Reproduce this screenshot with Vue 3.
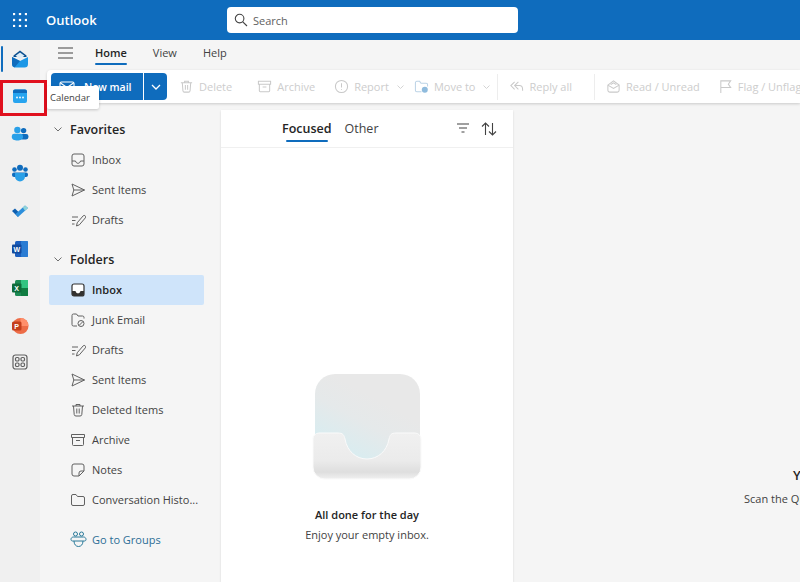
<template>
  <div class="app">
    <header class="topbar">
      <svg class="waffle" width="14" height="14" viewBox="0 0 14 14">
        <template v-for="x in [1, 7, 13]" :key="x">
          <circle v-for="y in [1, 7, 13]" :key="y" :cx="x" :cy="y" r="1.3" fill="#fff" />
        </template>
      </svg>
      <span class="brand">Outlook</span>
      <div class="search">
        <svg width="14" height="14" viewBox="0 0 14 14" fill="none" stroke="#424242" stroke-width="1.1">
          <circle cx="5.6" cy="5.6" r="4.3" />
          <path d="M8.8 8.8l4.2 4.2" />
        </svg>
        <span>Search</span>
      </div>
    </header>

    <div class="body">
      <nav class="rail">
        <span class="rail-active"></span>
        <div class="rail-item">
          <svg width="20" height="20" viewBox="0 0 20 20">
            <path d="M3.500 8V6.500L10 1.500l6.500 5V8z" fill="#0a4f8f" />
            <path d="M5.500 6.800L10 3.400l4.500 3.400L10 10z" fill="#dcecf7" />
            <path d="M2 8l8 4 8-4v7a3.500 3.500 0 0 1-3.500 3.500h-9A3.500 3.500 0 0 1 2 15z" fill="#1c97e6" />
            <path d="M2 8l8 4-5.500 6.400A3.500 3.500 0 0 1 2 15z" fill="#0f6cbd" />
          </svg>
        </div>
        <div class="rail-item">
          <svg width="16" height="16" viewBox="0 0 16 16">
            <rect x="1" y="1.500" width="14" height="13.500" rx="2" fill="#27a4ef" />
            <path d="M1 5V3.500a2 2 0 0 1 2-2h10a2 2 0 0 1 2 2V5z" fill="#0f6cbd" />
            <circle cx="5" cy="9.500" r="0.900" fill="#fff" />
            <circle cx="8" cy="9.500" r="0.900" fill="#fff" />
            <circle cx="11" cy="9.500" r="0.900" fill="#fff" />
          </svg>
        </div>
        <div class="rail-item">
          <svg width="18" height="18" viewBox="0 0 18 18">
            <circle cx="12.600" cy="5.600" r="2.700" fill="#0f6cbd" />
            <rect x="9" y="9" width="8.500" height="5.500" rx="2.400" fill="#0f6cbd" />
            <circle cx="6.400" cy="5" r="3.200" fill="#2aa0e8" />
            <path d="M0.800 11a2.400 2.400 0 0 1 2.400-2.200h6.400A2.400 2.400 0 0 1 12 11v1.200c0 2-2.600 3.300-5.600 3.300S0.800 14.200 0.800 12.200z" fill="#2aa0e8" />
          </svg>
        </div>
        <div class="rail-item">
          <svg width="18" height="18" viewBox="0 0 18 18">
            <circle cx="9" cy="3.800" r="3" fill="#0f6cbd" />
            <circle cx="3.500" cy="5.500" r="2.300" fill="#0f6cbd" />
            <circle cx="14.500" cy="5.500" r="2.300" fill="#0f6cbd" />
            <rect x="1" y="8.500" width="16" height="4.500" rx="2" fill="#0f6cbd" />
            <path d="M4 9h10v3.500a5 5 0 0 1-10 0z" fill="#2aa0e8" />
          </svg>
        </div>
        <div class="rail-item">
          <svg width="18" height="18" viewBox="0 0 18 18">
            <path d="M1 9l3-2.500L8 10.500 7 15z" fill="#0f5fb0" />
            <path d="M7 15L4.500 12 14 3.500 17 6z" fill="#2c8fdc" />
            <path d="M14 3.500L17 6l-3 2.700-2.200-3.200z" fill="#8fd3d8" />
          </svg>
        </div>
        <div class="rail-item">
          <svg width="18" height="18" viewBox="0 0 18 18">
            <rect x="4" y="1" width="13" height="16" rx="1.500" fill="#1b5ebe" />
            <rect x="10" y="1" width="7" height="16" rx="1" fill="#2b7cd3" />
            <rect x="1" y="4.500" width="9.500" height="9" rx="1" fill="#124b9e" />
            <text x="5.700" y="11.700" class="glyph">W</text>
          </svg>
        </div>
        <div class="rail-item">
          <svg width="18" height="18" viewBox="0 0 18 18">
            <rect x="4" y="1" width="13" height="16" rx="1.500" fill="#1d8a54" />
            <rect x="10" y="1" width="7" height="8" fill="#33c481" />
            <rect x="10" y="9" width="7" height="8" fill="#107c41" />
            <rect x="1" y="4.500" width="9.500" height="9" rx="1" fill="#0e6b3a" />
            <text x="5.700" y="11.700" class="glyph">X</text>
          </svg>
        </div>
        <div class="rail-item">
          <svg width="18" height="18" viewBox="0 0 18 18">
            <circle cx="9.500" cy="9" r="8" fill="#ed6c47" />
            <path d="M9.500 1a8 8 0 0 1 8 8h-8z" fill="#ff8f6b" />
            <rect x="1" y="4.500" width="9.500" height="9" rx="1.500" fill="#c43e1c" />
            <text x="5.700" y="11.700" class="glyph">P</text>
          </svg>
        </div>
        <div class="rail-item">
          <svg width="16" height="16" viewBox="0 0 16 16" fill="none" stroke="#616161" stroke-width="1.200">
            <rect x="1" y="1" width="14" height="14" rx="2.500" />
            <rect x="3.500" y="3.500" width="3.500" height="3.500" rx="1.200" />
            <rect x="9" y="3.500" width="3.500" height="3.500" rx="1.200" />
            <rect x="3.500" y="9" width="3.500" height="3.500" rx="1.200" />
            <rect x="9" y="9" width="3.500" height="3.500" rx="1.200" />
          </svg>
        </div>
      </nav>

      <div class="main">
        <div class="tabs">
          <svg class="burger" width="15" height="12" viewBox="0 0 15 12" stroke="#424242" stroke-width="1.100">
            <path d="M0 1h15M0 6h15M0 11h15" />
          </svg>
          <span class="tab tab-active">Home</span>
          <span class="tab">View</span>
          <span class="tab">Help</span>
        </div>

        <div class="toolbar">
          <div class="new-mail">
            <span class="new-main">
              <svg width="16" height="14" viewBox="0 0 16 14" fill="none" stroke="#fff" stroke-width="1.100">
                <rect x="1" y="2" width="14" height="10" rx="1.500" />
                <path d="M1.500 3l6.500 4.500L14.500 3" />
              </svg>
              New mail
            </span>
            <span class="new-arrow">
              <svg width="10" height="6" viewBox="0 0 10 6" fill="none" stroke="#fff" stroke-width="1.300"><path d="M1 1l4 4 4-4" /></svg>
            </span>
          </div>
          <template v-for="action in actions" :key="action.label">
            <span v-if="action.divider" class="tool-divider" :style="{ marginLeft: action.before + 'px' }"></span>
            <span class="tool" :style="{ marginLeft: action.gap + 'px' }">
              <svg width="15" height="15" viewBox="0 0 16 16" fill="none" :stroke="action.tint || '#c9c9c9'" stroke-width="1.100">
                <path :d="icons[action.icon]" />
                <circle v-if="action.icon === 'move'" cx="11.500" cy="11.500" r="3.200" fill="#8fbbdd" stroke="none" />
              </svg>
              {{ action.label }}
              <svg v-if="action.menu" class="tool-chev" width="7" height="4" viewBox="0 0 7 4" fill="none" stroke="#d4d4d4"><path d="M0.500 0.500l3 3 3-3" /></svg>
            </span>
          </template>
        </div>

        <div class="content">
          <aside class="sidebar">
            <section v-for="group in groups" :key="group.title" class="group">
              <div class="group-title">
                <svg width="8" height="5" viewBox="0 0 8 5" fill="none" stroke="#707070"><path d="M0.500 0.500l3.500 3.500 3.500-3.500" /></svg>
                {{ group.title }}
              </div>
              <div
                v-for="item in group.items"
                :key="item.label"
                class="folder"
                :class="{ 'folder-on': item.on }"
              >
                <svg width="16" height="16" viewBox="0 0 16 16" fill="none" stroke="#616161" stroke-width="1">
                  <path v-if="item.on" d="M2 4a2 2 0 0 1 2-2h8a2 2 0 0 1 2 2v8a2 2 0 0 1-2 2H4a2 2 0 0 1-2-2z" fill="#fff" stroke="#323130" stroke-width="1.200" />
                  <path v-if="item.on" d="M2 9h3.500c0.400 1.500 1.300 2.300 2.500 2.300s2.100-0.800 2.500-2.300H14v3a2 2 0 0 1-2 2H4a2 2 0 0 1-2-2z" fill="#323130" stroke="none" />
                  <path v-else :d="icons[item.icon]" />
                </svg>
                <span>{{ item.label }}</span>
              </div>
            </section>
            <div class="groups-link">
              <svg width="17" height="17" viewBox="0 0 17 17" fill="none" stroke="#2a7a9a" stroke-width="1">
                <circle cx="5.500" cy="3" r="2" />
                <circle cx="11.500" cy="3" r="2" />
                <path d="M1 8.500C1 7 2 6 3.500 6h10C15 6 16 7 16 8.500c0 1-0.800 1.500-1.500 1.500h-12C1.800 10 1 9.500 1 8.500z" />
                <path d="M4 10c0 3.500 2 5.500 4.500 5.500S13 13.500 13 10" />
              </svg>
              Go to Groups
            </div>
          </aside>

          <section class="list">
            <div class="list-head">
              <span class="pivot pivot-on">Focused</span>
              <span class="pivot">Other</span>
              <svg class="filter" width="14" height="10" viewBox="0 0 14 10" stroke="#424242" stroke-width="1.100"><path d="M1 1h12M3 5h8M5.500 9h3" /></svg>
              <svg class="sort" width="16" height="14" viewBox="0 0 16 14" fill="none" stroke="#424242" stroke-width="1.100">
                <path d="M4.500 13V1M1 4.500L4.500 1 8 4.500M11.500 1v12M8 9.500l3.500 3.500L15 9.500" />
              </svg>
            </div>
            <div class="empty">
              <svg width="110" height="108" viewBox="0 0 110 108">
                <defs>
                  <linearGradient id="back" x1="0.100" y1="0.950" x2="0.550" y2="0.250">
                    <stop offset="0" stop-color="#d3eef3" />
                    <stop offset="0.650" stop-color="#e5e9ea" />
                    <stop offset="1" stop-color="#e8e8e8" />
                  </linearGradient>
                  <linearGradient id="tray" x1="0" y1="0" x2="0" y2="1">
                    <stop offset="0" stop-color="#f0f0f0" />
                    <stop offset="0.600" stop-color="#ebebeb" />
                    <stop offset="0.850" stop-color="#dedede" />
                    <stop offset="1" stop-color="#f0f0f0" />
                  </linearGradient>
                </defs>
                <rect x="3" y="1" width="105" height="90" rx="20" fill="url(#back)" />
                <path d="M1 66a6 6 0 0 1 6-6h19c5 0 6 2 7 6 2 12 11 20 22 20s20-8 22-20c1-4 2-6 7-6h19a6 6 0 0 1 6 6v28a12 12 0 0 1-12 12H13A12 12 0 0 1 1 94z" fill="url(#tray)" stroke="#fafafa" stroke-width="1" />
              </svg>
              <strong>All done for the day</strong>
              <span>Enjoy your empty inbox.</span>
            </div>
          </section>

          <section class="reading">
            <strong>You can also use Outlook on your phone</strong>
            <span>Scan the QR code to get the app</span>
          </section>
        </div>
      </div>
    </div>

    <div class="red-box"></div>
    <div class="tooltip">Calendar</div>
  </div>
</template>

<script setup>
const icons = {
  inbox: "M2 4a2 2 0 0 1 2-2h8a2 2 0 0 1 2 2v8a2 2 0 0 1-2 2H4a2 2 0 0 1-2-2zM2 9h3.500c0.400 1.500 1.300 2.300 2.500 2.300s2.100-0.800 2.500-2.300H14",
  sent: "M2 2l12.500 6L2 14l1.800-6zM3.800 8h10.700",
  drafts: "M2 5h6M2 8.500h3.500M2 12h2.500M6.500 14l0.700-3.200 6-7a1.500 1.500 0 0 1 2.200 2l-6 7z",
  junk: "M2 5V3.500A1.500 1.500 0 0 1 3.500 2h3L8 4h4.500A1.500 1.500 0 0 1 14 5.500v1M2 5v7.500A1.500 1.500 0 0 0 3.500 14H7M14 11.500a3 3 0 1 1-6 0 3 3 0 0 1 6 0zM9 13.500l4-4",
  trash: "M2 4h12M6 4V2.500h4V4M3.500 4l0.700 8.500A1.700 1.700 0 0 0 6 14h4a1.700 1.700 0 0 0 1.800-1.500l0.700-8.500M6.800 6.500v5M9.200 6.500v5",
  archive: "M1.500 2.500h13v3h-13zM2.500 5.500v7a1 1 0 0 0 1 1h9a1 1 0 0 0 1-1v-7M6 8.500h4",
  notes: "M2 4a2 2 0 0 1 2-2h8a2 2 0 0 1 2 2v5l-5 5H4a2 2 0 0 1-2-2zM14 9h-3a2 2 0 0 0-2 2v3",
  folder: "M1.500 4A1.500 1.500 0 0 1 3 2.500h3L7.500 4.500H13A1.500 1.500 0 0 1 14.500 6v6a1.500 1.500 0 0 1-1.500 1.500H3A1.500 1.500 0 0 1 1.500 12z",
  report: "M14.500 8a6.500 6.500 0 1 1-13 0 6.500 6.500 0 0 1 13 0zM8 4.500V9M8 11v0.800",
  move: "M1.500 4A1.500 1.500 0 0 1 3 2.500h3L7.500 4.500H13A1.500 1.500 0 0 1 14.500 6v2M1.500 4v8A1.500 1.500 0 0 0 3 13.500h5",
  reply: "M6 3L2 7l4 4M10 3L6 7l4 4M6 7h5c2 0 3.500 1.500 3.500 4v1.500",
  read: "M2 6.500L8 2l6 4.500V12a2 2 0 0 1-2 2H4a2 2 0 0 1-2-2zM2 6.500L8 10l6-3.500M5 6l3-2 3 2",
  flag: "M3 15V2h10.500L11 5.500 13.500 9H3",
};

const actions = [
  { label: "Delete", icon: "trash", gap: 12 },
  { label: "Archive", icon: "archive", gap: 25 },
  { label: "Report", icon: "report", gap: 19, menu: true },
  { label: "Move to", icon: "move", gap: 10, menu: true, tint: "#bcd3e6" },
  { label: "Reply all", icon: "reply", gap: 11, divider: true, before: 7 },
  { label: "Read / Unread", icon: "read", gap: 11, divider: true, before: 22 },
  { label: "Flag / Unflag", icon: "flag", gap: 18 },
];

const groups = [
  {
    title: "Favorites",
    items: [
      { label: "Inbox", icon: "inbox" },
      { label: "Sent Items", icon: "sent" },
      { label: "Drafts", icon: "drafts" },
    ],
  },
  {
    title: "Folders",
    items: [
      { label: "Inbox", icon: "inbox", on: true },
      { label: "Junk Email", icon: "junk" },
      { label: "Drafts", icon: "drafts" },
      { label: "Sent Items", icon: "sent" },
      { label: "Deleted Items", icon: "trash" },
      { label: "Archive", icon: "archive" },
      { label: "Notes", icon: "notes" },
      { label: "Conversation Histo...", icon: "folder" },
    ],
  },
];
</script>

<style>
html,
body {
  height: 100%;
  margin: 0;
  overflow: hidden;
}
</style>

<style scoped>
.app {
  position: relative;
  display: flex;
  flex-direction: column;
  width: 800px;
  height: 582px;
  overflow: hidden;
  background: #f5f5f5;
  color: #424242;
  font-family: "Open Sans", "Noto Sans", sans-serif;
  font-size: 11px;
}

.topbar {
  display: flex;
  align-items: center;
  flex: none;
  height: 40px;
  background: #0f6cbd;
  color: #fff;
}
.waffle {
  margin-left: 13px;
}
.brand {
  margin-left: 19px;
  width: 181px;
  font-size: 13px;
  font-weight: 600;
}
.search {
  display: flex;
  align-items: center;
  gap: 5px;
  box-sizing: border-box;
  width: 291px;
  height: 26px;
  padding-left: 7px;
  border-radius: 4px;
  background: #fff;
  color: #616161;
  font-size: 11px;
}

.body {
  display: flex;
  flex: 1;
  min-height: 0;
}

.rail {
  position: relative;
  flex: none;
  width: 40px;
  background: #f0f0f0;
}
.rail-active {
  position: absolute;
  left: 1px;
  top: 6px;
  width: 2px;
  height: 26px;
  border-radius: 1px;
  background: #0f6cbd;
}
.rail-item {
  display: flex;
  align-items: center;
  justify-content: center;
  height: 38.3px;
}
.rail-item:first-of-type {
  height: 37px;
}
.rail-item:last-child {
  height: 33px;
}
.glyph {
  fill: #fff;
  font-family: "Liberation Sans", sans-serif;
  font-size: 7px;
  font-weight: 700;
  text-anchor: middle;
}

.main {
  display: flex;
  flex: 1;
  flex-direction: column;
  min-width: 0;
}

.tabs {
  display: flex;
  align-items: center;
  flex: none;
  box-sizing: border-box;
  height: 30px;
  padding: 0 0 4px 18px;
}
.burger {
  margin-right: 22px;
}
.tab {
  position: relative;
  margin-right: 26px;
  font-size: 11px;
  line-height: 26px;
}
.tab-active {
  font-weight: 600;
  color: #242424;
}
.tab-active::after {
  content: "";
  position: absolute;
  left: 0;
  right: 0;
  bottom: 1px;
  height: 2px;
  border-radius: 1px;
  background: #0f6cbd;
}

.toolbar {
  display: flex;
  align-items: center;
  flex: none;
  height: 33px;
  margin-left: 7px;
  padding-left: 4px;
  overflow: hidden;
  border-radius: 4px 0 0 4px;
  background: #fff;
  box-shadow: 0 1px 3px rgba(0, 0, 0, 0.18);
  color: #cdcdcd;
  white-space: nowrap;
}
.new-mail {
  display: flex;
  flex: none;
  height: 27px;
  color: #fff;
  font-size: 10.5px;
  font-weight: 600;
}
.new-main {
  display: flex;
  align-items: center;
  gap: 9px;
  width: 92px;
  box-sizing: border-box;
  padding-left: 8px;
  border-radius: 4px 0 0 4px;
  background: #0f6cbd;
}
.new-arrow {
  display: flex;
  align-items: center;
  justify-content: center;
  width: 23px;
  margin-left: 1px;
  border-radius: 0 4px 4px 0;
  background: #0f6cbd;
}
.tool {
  display: inline-flex;
  align-items: center;
  flex: none;
  gap: 5px;
}
.tool-chev {
  margin-left: 3px;
}
.tool-divider {
  flex: none;
  width: 1px;
  height: 26px;
  background: #ededed;
}

.content {
  display: flex;
  flex: 1;
  min-height: 0;
  padding-top: 7px;
}

.sidebar {
  flex: none;
  width: 155px;
  margin-left: 9px;
  padding-top: 7px;
}
.group {
  margin-bottom: 12px;
}
.group:last-of-type {
  margin-bottom: 9px;
}
.group-title {
  display: flex;
  align-items: center;
  gap: 8px;
  height: 24px;
  padding-left: 5px;
  margin-bottom: 4px;
  font-size: 12.5px;
  font-weight: 600;
  color: #242424;
}
.folder {
  display: flex;
  align-items: center;
  gap: 6px;
  box-sizing: border-box;
  height: 30px;
  padding: 0 0 1px 21px;
  border-radius: 2px;
  white-space: nowrap;
}
.folder-on {
  background: #cfe4fa;
  font-weight: 600;
  color: #242424;
}
.groups-link {
  display: flex;
  align-items: center;
  gap: 5px;
  height: 30px;
  padding-left: 21px;
  color: #2c6e95;
}

.list {
  display: flex;
  flex: none;
  flex-direction: column;
  width: 292px;
  margin-left: 17px;
  background: #fff;
  box-shadow: 0 1px 2px rgba(0, 0, 0, 0.12);
}
.list-head {
  position: relative;
  display: flex;
  align-items: center;
  flex: none;
  gap: 13px;
  height: 37px;
  padding-left: 61px;
  border-bottom: 1px solid #f0f0f0;
}
.pivot {
  position: relative;
  font-size: 12.5px;
}
.pivot-on {
  font-weight: 600;
  color: #242424;
}
.pivot-on::after {
  content: "";
  position: absolute;
  left: 4px;
  right: 4px;
  bottom: -5px;
  height: 2px;
  border-radius: 1px;
  background: #0f6cbd;
}
.filter {
  position: absolute;
  left: 235px;
  top: 13px;
}
.sort {
  position: absolute;
  left: 260px;
  top: 12px;
}
.empty {
  display: flex;
  flex-direction: column;
  align-items: center;
  padding-top: 225px;
}
.empty strong {
  margin-top: 26px;
  font-weight: 600;
  font-size: 11px;
  color: #242424;
}
.empty span {
  margin-top: 5px;
}

.reading {
  flex: 1;
  min-width: 0;
  padding: 356px 0 0 231px;
  overflow: hidden;
  white-space: nowrap;
}
.reading strong {
  display: block;
  margin-left: 49px;
  font-size: 13px;
  font-weight: 600;
  color: #242424;
}
.reading span {
  display: block;
  margin-top: 7px;
}

.red-box {
  position: absolute;
  left: 0;
  top: 80px;
  box-sizing: border-box;
  width: 47px;
  height: 36px;
  border: 3px solid #e0101e;
}
.tooltip {
  position: absolute;
  left: 47px;
  top: 86px;
  box-sizing: border-box;
  width: 52px;
  height: 23px;
  padding-left: 3px;
  border-radius: 2px;
  background: #fff;
  box-shadow: 0 1px 3px rgba(0, 0, 0, 0.2);
  font-size: 9.5px;
  line-height: 23px;
}
</style>
